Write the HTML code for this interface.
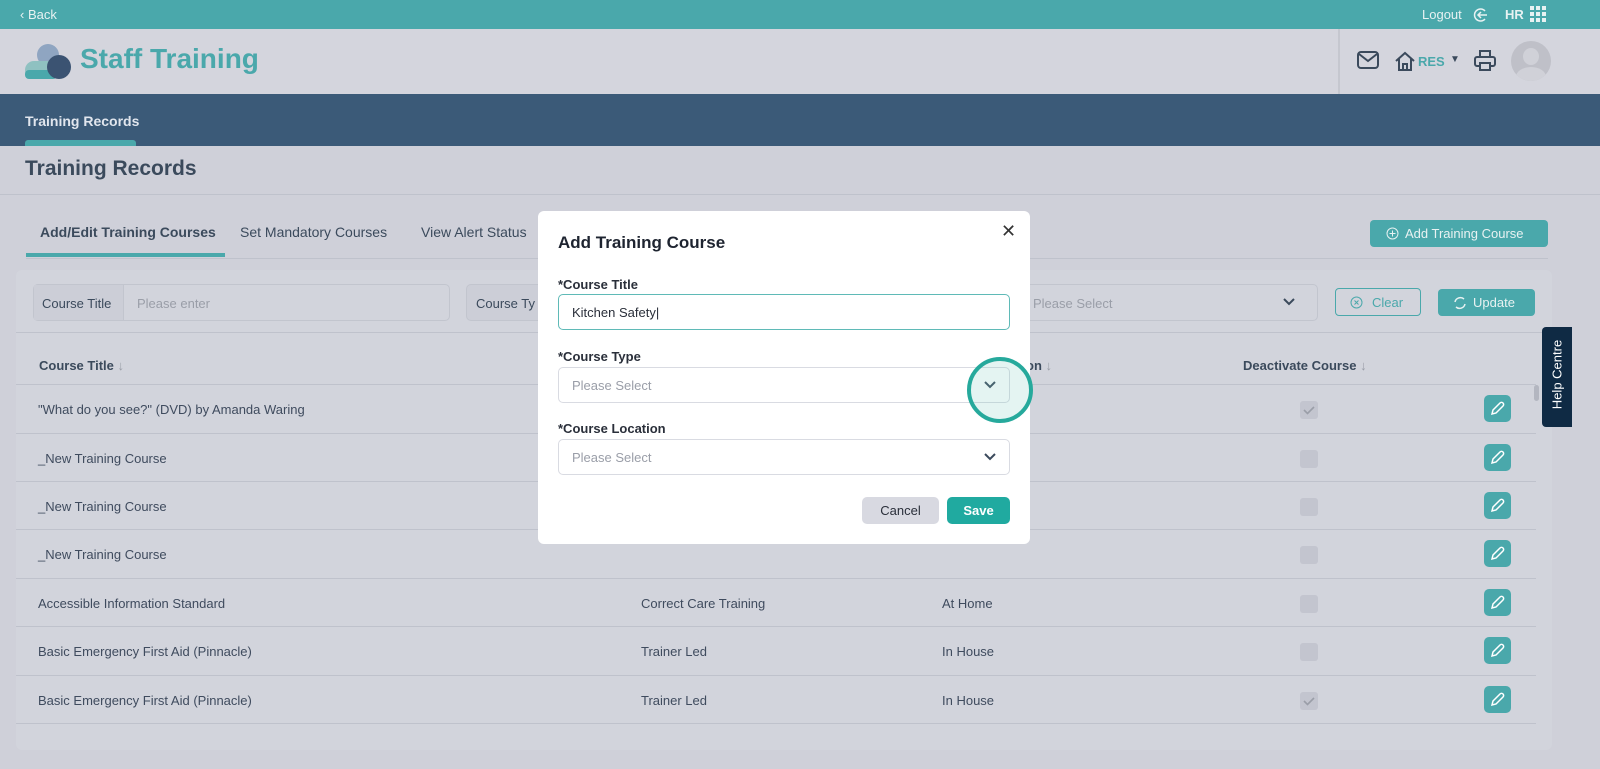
<!DOCTYPE html>
<html><head><meta charset="utf-8"><style>
*{box-sizing:border-box;margin:0;padding:0}
body{width:1600px;height:769px;overflow:hidden;font-family:"Liberation Sans",sans-serif;background:#cfd0d9;position:relative;color:#3b4a5c}
.top{position:absolute;top:0;left:0;right:0;height:29px;background:#4aa8ab;color:#e8f2f2;font-size:13px}
.hdr{position:absolute;top:29px;left:0;right:0;height:65px;background:#d4d5dd}
.nav{position:absolute;top:94px;left:0;right:0;height:52px;background:#3b5a78;color:#e1e6ee;font-size:14px;font-weight:bold}
.abs{position:absolute}
.card{position:absolute;left:16px;top:270px;width:1536px;height:480px;background:#d2d4dc;border-radius:6px}
.row{position:absolute;left:16px;width:1520px;height:48px;border-top:1px solid #bfc2cc;font-size:13px;color:#3f4b5e}
.row span{position:absolute;top:17px}
.edit{position:absolute;left:1468px;top:10px;width:27px;height:27px;background:#4aa8ab;border-radius:5px}
.edit svg{position:absolute;left:5px;top:5px}
.cb{position:absolute;left:1284px;top:16px;width:18px;height:18px;background:#c3c5cf;border-radius:3px}
.modal{position:absolute;left:538px;top:211px;width:492px;height:333px;background:#fff;border-radius:6px}
.lbl{position:absolute;left:20px;font-size:13px;font-weight:bold;color:#2a2f3a}
.inp{position:absolute;left:20px;width:452px;height:36px;border:1px solid #d9dbe2;border-radius:5px;font-size:13px;color:#9a9ea8;padding:10px 13px}
</style></head><body>
<div class="top"><span class="abs" style="left:20px;top:7px">‹ Back</span>
<span class="abs" style="left:1422px;top:7px">Logout</span>
<svg class="abs" style="left:1473px;top:7px" width="16" height="16" viewBox="0 0 16 16"><path d="M12 4A6 6 0 1 0 12 12M5 8h9M8 5 5 8 8 11" stroke="#e8f2f2" stroke-width="1.5" fill="none"/></svg>
<span class="abs" style="left:1505px;top:7px;font-weight:bold">HR</span>
<svg class="abs" style="left:1530px;top:6px" width="17" height="17"><g fill="#e8f2f2"><rect x="0" y="0" width="4" height="4"/><rect x="6" y="0" width="4" height="4"/><rect x="12" y="0" width="4" height="4"/><rect x="0" y="6" width="4" height="4"/><rect x="6" y="6" width="4" height="4"/><rect x="12" y="6" width="4" height="4"/><rect x="0" y="12" width="4" height="4"/><rect x="6" y="12" width="4" height="4"/><rect x="12" y="12" width="4" height="4"/></g></svg>
</div>
<div class="hdr">
<svg class="abs" style="left:24px;top:14px" width="48" height="38"><circle cx="24" cy="12" r="11" fill="#8fa5c1"/><rect x="1" y="18" width="32" height="18" rx="9" fill="#8fc1c1"/><rect x="1" y="27" width="32" height="9" rx="4" fill="#4aa8ab"/><circle cx="35" cy="24" r="12" fill="#3b5372"/></svg>
<div class="abs" style="left:80px;top:14px;font-size:28px;font-weight:bold;color:#4aa8ab">Staff Training</div>
<div class="abs" style="left:1338px;top:0;width:2px;height:65px;background:#c5c7cf"></div>
<svg class="abs" style="left:1357px;top:22px" width="22" height="18"><rect x="1" y="1" width="20" height="16" rx="3" stroke="#3b4a5c" stroke-width="2" fill="none"/><path d="M2 3l9 7 9-7" stroke="#3b4a5c" stroke-width="2" fill="none"/></svg>
<svg class="abs" style="left:1394px;top:22px" width="22" height="20"><path d="M2 10 11 2 20 10M5 8v11h12V8M9 19v-6h4v6" stroke="#3b4a5c" stroke-width="2" fill="none"/></svg>
<span class="abs" style="left:1418px;top:25px;color:#4aa8ab;font-weight:bold;font-size:13px">RES</span>
<span class="abs" style="left:1450px;top:25px;font-size:10px">▼</span>
<svg class="abs" style="left:1474px;top:21px" width="22" height="22"><rect x="6" y="1" width="10" height="6" stroke="#3b4a5c" stroke-width="2" fill="none"/><rect x="1" y="7" width="20" height="9" rx="2" stroke="#3b4a5c" stroke-width="2" fill="none"/><rect x="6" y="13" width="10" height="7" stroke="#3b4a5c" stroke-width="2" fill="#d4d5dd"/></svg>
<div class="abs" style="left:1511px;top:12px;width:40px;height:40px;border-radius:50%;background:#bfc0c8;overflow:hidden"><div class="abs" style="left:12px;top:7px;width:16px;height:17px;border-radius:50%;background:#d0d1d8"></div><div class="abs" style="left:5px;top:26px;width:30px;height:20px;border-radius:50%;background:#d0d1d8"></div></div>
</div>
<div class="nav"><span class="abs" style="left:25px;top:19px">Training Records</span><div class="abs" style="left:25px;top:46px;width:111px;height:6px;background:#4aa8ab;border-radius:3px 3px 0 0"></div></div>
<div class="abs" style="left:25px;top:157px;font-size:21px;font-weight:bold;color:#3b4a5c">Training Records</div>
<div class="abs" style="left:0;top:194px;width:1600px;height:1px;background:#bfc2cc"></div>
<div class="abs" style="left:40px;top:224px;font-size:14px;font-weight:bold">Add/Edit Training Courses</div>
<div class="abs" style="left:26px;top:253px;width:199px;height:4px;background:#4aa8ab"></div>
<div class="abs" style="left:240px;top:224px;font-size:14px">Set Mandatory Courses</div>
<div class="abs" style="left:421px;top:224px;font-size:14px">View Alert Status</div>
<div class="abs" style="left:26px;top:258px;width:1522px;height:1px;background:#bfc2cc"></div>
<div class="abs" style="left:1370px;top:220px;width:178px;height:27px;background:#4aa8ab;border-radius:4px;color:#e8f2f2;font-size:13px;padding:6px 0 0 35px">Add Training Course</div>
<svg class="abs" style="left:1386px;top:227px" width="13" height="13"><circle cx="6.5" cy="6.5" r="5.5" stroke="#e8f2f2" fill="none"/><path d="M6.5 3.5v6M3.5 6.5h6" stroke="#e8f2f2"/></svg>
<div class="card"></div>
<div class="abs" style="left:33px;top:284px;width:417px;height:37px;border:1px solid #c2c5ce;border-radius:5px;font-size:13px"><div class="abs" style="left:0;top:0;width:90px;height:35px;background:#ccced7;border-right:1px solid #c2c5ce;padding:11px 8px">Course Title</div><span class="abs" style="left:103px;top:11px;color:#9a9ea8">Please enter</span></div>
<div class="abs" style="left:466px;top:284px;width:80px;height:37px;border:1px solid #c2c5ce;border-radius:5px;background:#ccced7;font-size:13px;padding:11px 9px">Course Ty</div>
<div class="abs" style="left:1020px;top:284px;width:298px;height:37px;border:1px solid #c2c5ce;border-radius:5px;font-size:13px;color:#9a9ea8;padding:11px 12px">Please Select<svg class="abs" style="left:262px;top:13px" width="12" height="8"><path d="M1 1l5 5 5-5" stroke="#3b4a5c" stroke-width="2" fill="none"/></svg></div>
<div class="abs" style="left:1335px;top:288px;width:86px;height:28px;border:1px solid #4aa8ab;border-radius:4px;color:#4aa8ab;font-size:13px;padding:6px 0 0 36px">Clear</div>
<svg class="abs" style="left:1350px;top:296px" width="13" height="13"><circle cx="6.5" cy="6.5" r="5.5" stroke="#4aa8ab" fill="none"/><path d="M4.5 4.5l4 4M8.5 4.5l-4 4" stroke="#4aa8ab"/></svg>
<div class="abs" style="left:1438px;top:289px;width:97px;height:27px;background:#4aa8ab;border-radius:4px;color:#e8f2f2;font-size:13px;padding:6px 0 0 35px">Update</div>
<svg class="abs" style="left:1453px;top:296px" width="14" height="14"><path d="M11 3A5.5 5.5 0 0 0 2 6M3 11a5.5 5.5 0 0 0 9-3" stroke="#e8f2f2" stroke-width="1.5" fill="none"/></svg>
<div class="abs" style="left:16px;top:332px;width:1536px;height:1px;background:#bfc2cc"></div>
<div class="abs" style="left:39px;top:358px;font-size:13px;font-weight:bold">Course Title <span style="color:#9a9ea8;font-weight:normal">↓</span></div>
<div class="abs" style="left:1026px;top:358px;font-size:13px;font-weight:bold">on <span style="color:#9a9ea8;font-weight:normal">↓</span></div>
<div class="abs" style="left:1243px;top:358px;font-size:13px;font-weight:bold">Deactivate Course <span style="color:#9a9ea8;font-weight:normal">↓</span></div>
<div class="row" style="top:384px"><span style="left:22px">"What do you see?" (DVD) by Amanda Waring</span><div class="cb"><svg width="18" height="18"><path d="M4 9l3.5 3.5L14 6" stroke="#9a9ea8" stroke-width="1.6" fill="none"/></svg></div><div class="edit"><svg width="17" height="17"><path d="M3 14l1-4 7-7a2 2 0 0 1 3 3l-7 7z" stroke="#fff" stroke-width="1.5" fill="none"/></svg></div></div>
<div class="row" style="top:433px"><span style="left:22px">_New Training Course</span><div class="cb"></div><div class="edit"><svg width="17" height="17"><path d="M3 14l1-4 7-7a2 2 0 0 1 3 3l-7 7z" stroke="#fff" stroke-width="1.5" fill="none"/></svg></div></div>
<div class="row" style="top:481px"><span style="left:22px">_New Training Course</span><div class="cb"></div><div class="edit"><svg width="17" height="17"><path d="M3 14l1-4 7-7a2 2 0 0 1 3 3l-7 7z" stroke="#fff" stroke-width="1.5" fill="none"/></svg></div></div>
<div class="row" style="top:529px"><span style="left:22px">_New Training Course</span><div class="cb"></div><div class="edit"><svg width="17" height="17"><path d="M3 14l1-4 7-7a2 2 0 0 1 3 3l-7 7z" stroke="#fff" stroke-width="1.5" fill="none"/></svg></div></div>
<div class="row" style="top:578px"><span style="left:22px">Accessible Information Standard</span><span style="left:625px">Correct Care Training</span><span style="left:926px">At Home</span><div class="cb"></div><div class="edit"><svg width="17" height="17"><path d="M3 14l1-4 7-7a2 2 0 0 1 3 3l-7 7z" stroke="#fff" stroke-width="1.5" fill="none"/></svg></div></div>
<div class="row" style="top:626px"><span style="left:22px">Basic Emergency First Aid (Pinnacle)</span><span style="left:625px">Trainer Led</span><span style="left:926px">In House</span><div class="cb"></div><div class="edit"><svg width="17" height="17"><path d="M3 14l1-4 7-7a2 2 0 0 1 3 3l-7 7z" stroke="#fff" stroke-width="1.5" fill="none"/></svg></div></div>
<div class="row" style="top:675px"><span style="left:22px">Basic Emergency First Aid (Pinnacle)</span><span style="left:625px">Trainer Led</span><span style="left:926px">In House</span><div class="cb"><svg width="18" height="18"><path d="M4 9l3.5 3.5L14 6" stroke="#9a9ea8" stroke-width="1.6" fill="none"/></svg></div><div class="edit"><svg width="17" height="17"><path d="M3 14l1-4 7-7a2 2 0 0 1 3 3l-7 7z" stroke="#fff" stroke-width="1.5" fill="none"/></svg></div></div>
<div class="row" style="top:723px;height:1px"></div>
<div class="abs" style="left:1534px;top:385px;width:5px;height:16px;background:#b3b6c0;border-radius:3px"></div>
<div class="abs" style="left:1542px;top:327px;width:30px;height:100px;background:#0f2a44;border-radius:4px 0 0 4px"><div class="abs" style="left:-35px;top:40px;width:100px;transform:rotate(-90deg);color:#fff;font-size:13px;text-align:center">Help Centre</div></div>
<div class="modal">
<div class="abs" style="left:20px;top:22px;font-size:17px;font-weight:bold;color:#1e2430">Add Training Course</div>
<div class="abs" style="left:463px;top:10px;font-size:18px;color:#333">✕</div>
<div class="lbl" style="top:66px">*Course Title</div>
<div class="inp" style="top:83px;border-color:#5fbab7;color:#2a2f3a">Kitchen Safety|</div>
<div class="lbl" style="top:138px">*Course Type</div>
<div class="inp" style="top:156px">Please Select</div>
<div class="lbl" style="top:210px">*Course Location</div>
<div class="inp" style="top:228px">Please Select</div>
<svg class="abs" style="left:446px;top:170px" width="12" height="8"><path d="M1 1l5 5 5-5" stroke="#3b4a5c" stroke-width="2" fill="none"/></svg>
<svg class="abs" style="left:446px;top:242px" width="12" height="8"><path d="M1 1l5 5 5-5" stroke="#3b4a5c" stroke-width="2" fill="none"/></svg>
<div class="abs" style="left:429px;top:146px;width:66px;height:66px;border-radius:50%;border:4px solid #26a99c;background:rgba(120,200,190,0.2)"></div>
<div class="abs" style="left:324px;top:286px;width:77px;height:27px;background:#d8d9e1;border-radius:5px;font-size:13px;text-align:center;padding-top:6px;color:#2a2f3a">Cancel</div>
<div class="abs" style="left:409px;top:286px;width:63px;height:27px;background:#20aaa0;border-radius:5px;font-size:13px;text-align:center;padding-top:6px;color:#fff;font-weight:bold">Save</div>
</div>
</body></html>
